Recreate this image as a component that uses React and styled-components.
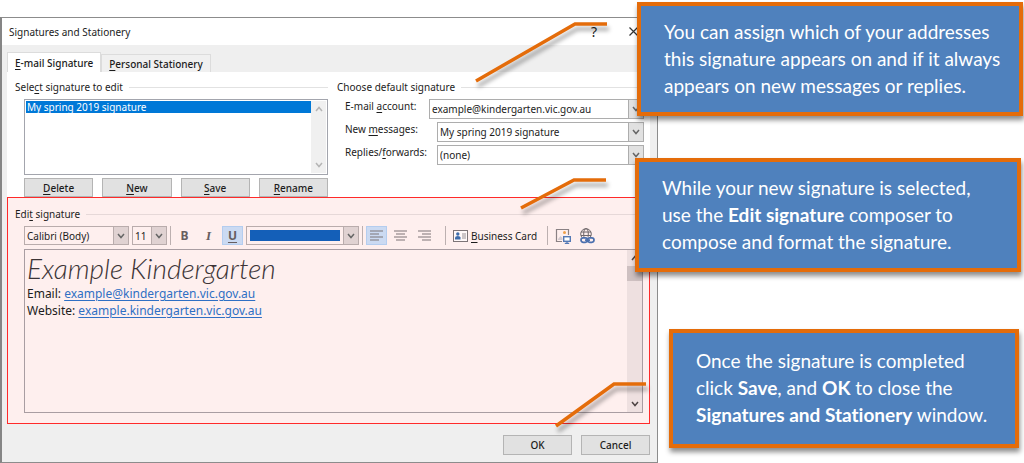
import React from "react";
import styled, { createGlobalStyle, css } from "styled-components";

const GlobalStyle = createGlobalStyle`
  * {
    box-sizing: border-box;
  }
  body {
    margin: 0;
    background: #fff;
    color: #1c1c1c;
    font-family: "Noto Sans", "Open Sans", sans-serif;
    font-size: 10px;
    line-height: 14px;
  }
  button,
  select {
    font: inherit;
    color: inherit;
  }
  u {
    text-underline-offset: 2px;
  }
`;

const Page = styled.div`
  position: relative;
  padding: 17px 366px 0 0;
`;

const Dialog = styled.main`
  background: #efefef;
  border: 1px solid #8c8c8c;
  border-left: 2px solid #858585;
`;

const TitleBar = styled.header`
  display: flex;
  align-items: center;
  justify-content: space-between;
  height: 27px;
  padding: 0 18px 0 7px;
  background: #fff;
`;

const Title = styled.h1`
  margin: 0;
  font-size: 10px;
  font-weight: 400;
`;

const WindowButtons = styled.div`
  display: flex;
  gap: 27px;
`;

const WindowButton = styled.button`
  display: flex;
  align-items: center;
  justify-content: center;
  width: 12px;
  padding: 0;
  border: 0;
  background: none;
  font-size: 14px;
`;

const Tabs = styled.div`
  display: flex;
  align-items: flex-end;
  height: 27px;
  padding-left: 5px;
`;

const Tab = styled.button`
  height: ${(props) => (props.$active ? "20px" : "18px")};
  padding: 0 7px;
  border: 1px solid #dcdcdc;
  border-bottom: 0;
  background: ${(props) => (props.$active ? "#fff" : "#f0f0f0")};
  font-weight: 500;
`;

const Panel = styled.div`
  margin: 0 7px 0 5px;
`;

const TopRow = styled.div`
  display: grid;
  grid-template-columns: 313px 1fr;
  gap: 9px;
  padding: 8px 6px 0 8px;
  background: #fff;
`;

const Group = styled.section`
  display: flex;
  flex-direction: column;
  gap: 5px;
`;

const GroupTitle = styled.h2`
  display: flex;
  align-items: center;
  gap: 6px;
  margin: 0;
  font-size: 10px;
  font-weight: 400;
  white-space: pre;

  &::after {
    content: "";
    flex: 1;
    height: 1px;
    background: ${(props) => (props.$tinted ? "#e6d8d8" : "#e2e2e2")};
  }
`;

const ListArea = styled.div`
  display: flex;
  flex-direction: column;
  gap: 3px;
  padding-left: 9px;
`;

const ListBox = styled.div`
  display: flex;
  height: 76px;
  padding: 1px;
  border: 1px solid #a3a5ad;
`;

const List = styled.ul`
  flex: 1;
  margin: 0;
  padding: 0;
  list-style: none;
`;

const ListItem = styled.li`
  padding: 0 1px;
  line-height: 12px;
  background: #0078d7;
  color: #fff;
`;

const ScrollBar = styled.div`
  display: flex;
  flex-direction: column;
  align-items: center;
  width: 15px;
  background: ${(props) => (props.$tinted ? "#eee0e0" : "#f0f0f0")};
  color: ${(props) => (props.$tinted ? "#4d4444" : "#b5b5b5")};
`;

const ScrollArrow = styled.span`
  display: flex;
  align-items: center;
  justify-content: center;
  height: 16px;
`;

const Thumb = styled.div`
  width: 100%;
  height: 15px;
  background: #cec0c1;
`;

const Track = styled.div`
  flex: 1;
`;

const ButtonRow = styled.div`
  display: grid;
  grid-template-columns: repeat(4, 1fr);
  gap: 9px;
`;

const Button = styled.button`
  height: ${(props) => (props.$tall ? "20px" : "19px")};
  padding: 0;
  border: 1px solid #b4b4b4;
  background: #e1e1e1;
  font-weight: 500;
  line-height: 14px;
`;

const Fields = styled.div`
  display: flex;
  flex-direction: column;
  gap: 3px;
  padding-left: 8px;
`;

const Field = styled.div`
  display: flex;
  align-items: flex-start;
`;

const FieldLabel = styled.label`
  width: ${(props) => (props.$short ? "84px" : "92px")};
  white-space: nowrap;
`;

const SelectBox = styled.span`
  display: grid;
  flex: ${(props) => (props.$width ? `0 0 ${props.$width}` : "1")};
  height: ${(props) => (props.$tinted ? "19px" : "20px")};
  border: 1px solid ${(props) => (props.$tinted ? "#b9acac" : "#adadad")};
`;

const Select = styled.select`
  grid-area: 1 / 1;
  width: 100%;
  padding: 0 16px 0 2px;
  border: 0;
  background: transparent;
  appearance: none;
`;

const SelectArrow = styled.span`
  grid-area: 1 / 1;
  justify-self: end;
  display: flex;
  align-items: center;
  justify-content: center;
  width: 15px;
  border-left: 1px solid ${(props) => (props.$tinted ? "#b9acac" : "#adadad")};
  background: ${(props) => (props.$tinted ? "#e0d2d2" : "#e1e1e1")};
  color: #666;
  pointer-events: none;
`;

const EditPanel = styled.section`
  padding: 9px 6px 10px 7px;
  border: 1px solid #ff2a2a;
  background: #feefee;
`;

const Toolbar = styled.div`
  display: flex;
  align-items: center;
  gap: 3px;
  margin: 5px 0 4px 9px;
  height: 19px;
`;

const Divider = styled.span`
  width: 1px;
  height: 19px;
  margin: 0 ${(props) => (props.$wide ? "4px" : "0")} 0 ${(props) => (props.$wide ? "7px" : "0")};
  background: #bcb0b0;
`;

const ToolButton = styled.button`
  display: flex;
  align-items: center;
  justify-content: center;
  width: 21px;
  height: 19px;
  padding: 0;
  border: 1px solid transparent;
  background: none;
  color: #665e60;
  ${(props) =>
    props.$active &&
    css`
      border-color: #b4cdef;
      background: #cbdaf2;
    `}
`;

const Bold = styled.b`
  font-size: 12px;
`;

const Italic = styled.i`
  font-family: "Liberation Serif", serif;
  font-size: 13px;
  font-weight: 700;
`;

const ColorButton = styled.button`
  display: flex;
  align-items: stretch;
  width: 113px;
  height: 19px;
  padding: 0;
  border: 1px solid #b9acac;
  background: transparent;
`;

const Swatch = styled.span`
  flex: 1;
  margin: 3px;
  background: #145fb8;
`;

const CardButton = styled.button`
  display: flex;
  align-items: center;
  gap: 3px;
  padding: 0;
  border: 0;
  background: none;
  white-space: nowrap;
`;

const IconButton = styled.button`
  display: flex;
  width: 21px;
  padding: 0;
  border: 0;
  background: none;
`;

const Editor = styled.div`
  display: flex;
  height: 164px;
  margin-left: 9px;
  border: 1px solid #a99da2;
`;

const EditorText = styled.div`
  flex: 1;
  padding: 1px 2px;
  font-size: 12px;
  line-height: 17px;

  p {
    margin: 0;
  }
  a {
    color: #2f6fc4;
    text-underline-offset: 2px;
  }
`;

const Handwriting = styled.p`
  font-family: "Bradley Hand ITC", "Segoe Print", Lato, cursive;
  font-size: 28px;
  font-style: italic;
  font-weight: 300;
  line-height: 34px;
  color: #3c3436;
`;

const Footer = styled.footer`
  display: flex;
  justify-content: flex-end;
  gap: 9px;
  padding: 11px 7px 7px;

  button {
    width: 69px;
  }
`;

const Callouts = styled.aside`
  position: absolute;
  top: 2px;
  right: 1px;
  display: flex;
  flex-direction: column;
  align-items: flex-end;
`;

const Callout = styled.div`
  position: relative;
  width: ${(props) => (props.$small ? "350px" : "386px")};
  margin: 0 ${(props) => props.$inset || "0"} ${(props) => props.$space || "0"} 0;
  padding: ${(props) => (props.$small ? "14px 0 16px 23px" : "12px 0 13px 23px")};
  border: 4px solid #e46c0a;
  background: #4f81bd;
  box-shadow: 1px 4px 5px rgba(0, 0, 0, 0.45);
  color: #fff;
  font-family: Lato, sans-serif;
  font-size: 19px;
  font-variant-ligatures: none;
  line-height: 27px;
  white-space: nowrap;

  p {
    margin: 0;
  }
`;

const LeaderSvg = styled.svg`
  position: absolute;
  top: ${(props) => props.$top};
  right: ${(props) => props.$right};
  overflow: visible;
  filter: drop-shadow(2px 5px 2px rgba(0, 0, 0, 0.35));
  pointer-events: none;
`;

const Leader = ({ top, right, width, height }) => (
  <LeaderSvg $top={top} $right={right} width={width} height={height} aria-hidden="true">
    <path
      d={`M0 ${height}L${width - 32} 0H${width}`}
      fill="none"
      stroke="#e46c0a"
      strokeWidth="3.5"
    />
  </LeaderSvg>
);

const Chevron = ({ up }) => (
  <svg width="8" height="6" viewBox="0 0 8 6" aria-hidden="true">
    <path
      d={up ? "M1 5L4 1.5L7 5" : "M1 1L4 4.5L7 1"}
      fill="none"
      stroke="currentColor"
      strokeWidth="1.5"
    />
  </svg>
);

const CloseIcon = () => (
  <svg width="9" height="9" viewBox="0 0 9 9" aria-hidden="true">
    <path d="M0.5 0.5L8.5 8.5M8.5 0.5L0.5 8.5" stroke="#333" strokeWidth="1.2" />
  </svg>
);

const alignPaths = {
  left: "M0 1H13M0 4H9M0 7H13M0 10H9",
  center: "M0 1H13M2 4H11M0 7H13M2 10H11",
  right: "M0 1H13M4 4H13M0 7H13M4 10H13",
};

const AlignIcon = ({ side }) => (
  <svg width="13" height="11" viewBox="0 0 13 11" aria-hidden="true">
    <path d={alignPaths[side]} stroke="#7d7477" strokeWidth="1.2" />
  </svg>
);

const CardIcon = () => (
  <svg width="15" height="12" viewBox="0 0 15 12" aria-hidden="true">
    <rect x="0.5" y="0.5" width="14" height="11" fill="#fff8f8" stroke="#7d7477" />
    <circle cx="4.8" cy="4" r="1.7" fill="#3d6cab" />
    <path d="M2 9.5V7.5Q2 6 4.8 6Q7.5 6 7.5 7.5V9.5Z" fill="#3d6cab" />
    <path d="M9 4H13M9 6H13M9 8H13" stroke="#9a9296" />
  </svg>
);

const PictureIcon = () => (
  <svg width="16" height="16" viewBox="0 0 16 16" aria-hidden="true">
    <path d="M7 13.5H1.5V1.5H13.5V7" fill="none" stroke="#8a8184" strokeWidth="1.2" />
    <path d="M3 11L5.5 8L7.5 10V12H3Z" fill="#d5cbd0" />
    <circle cx="9.5" cy="4.5" r="1.5" fill="#f0a04a" />
    <rect x="8.7" y="8.7" width="6.6" height="4.6" fill="#fff" stroke="#5479b5" strokeWidth="1.4" />
    <path d="M12 13.5V15M9.8 15.3H14.2" stroke="#5479b5" strokeWidth="1.3" />
  </svg>
);

const LinkIcon = () => (
  <svg width="16" height="16" viewBox="0 0 16 16" fill="none" aria-hidden="true">
    <g stroke="#6f676a">
      <circle cx="7" cy="6" r="5.3" />
      <ellipse cx="7" cy="6" rx="2.3" ry="5.3" />
      <path d="M2 4H12M2 7.5H12" />
    </g>
    <rect x="1.5" y="9" width="14" height="6" rx="3" fill="#feefee" />
    <g stroke="#4a6fae" strokeWidth="1.7">
      <rect x="2" y="9.9" width="6.5" height="4.4" rx="2.2" />
      <rect x="8.5" y="9.9" width="6.5" height="4.4" rx="2.2" />
      <path d="M6 12.1H11" />
    </g>
  </svg>
);

const Dropdown = ({ id, label, value, width, tinted }) => (
  <SelectBox $width={width} $tinted={tinted}>
    <Select id={id} aria-label={label}>
      <option>{value}</option>
    </Select>
    <SelectArrow $tinted={tinted}>
      <Chevron />
    </SelectArrow>
  </SelectBox>
);

const App = () => {
  return (
    <>
      <GlobalStyle />
      <Page>
        <Dialog>
          <TitleBar>
            <Title>Signatures and Stationery</Title>
            <WindowButtons>
              <WindowButton aria-label="Help">?</WindowButton>
              <WindowButton aria-label="Close">
                <CloseIcon />
              </WindowButton>
            </WindowButtons>
          </TitleBar>

          <Tabs role="tablist">
            <Tab role="tab" aria-selected="true" $active>
              <u>E</u>-mail Signature
            </Tab>
            <Tab role="tab" aria-selected="false">
              <u>P</u>ersonal Stationery
            </Tab>
          </Tabs>

          <Panel>
            <TopRow>
              <Group>
                <GroupTitle>
                  <span>
                    Sele<u>c</u>t signature to edit
                  </span>
                </GroupTitle>
                <ListArea>
                  <ListBox>
                    <List role="listbox" aria-label="Select signature to edit">
                      <ListItem role="option" aria-selected="true">
                        My spring 2019 signature
                      </ListItem>
                    </List>
                    <ScrollBar>
                      <ScrollArrow>
                        <Chevron up />
                      </ScrollArrow>
                      <Track />
                      <ScrollArrow>
                        <Chevron />
                      </ScrollArrow>
                    </ScrollBar>
                  </ListBox>
                  <ButtonRow>
                    <Button>
                      <u>D</u>elete
                    </Button>
                    <Button>
                      <u>N</u>ew
                    </Button>
                    <Button>
                      <u>S</u>ave
                    </Button>
                    <Button>
                      <u>R</u>ename
                    </Button>
                  </ButtonRow>
                </ListArea>
              </Group>

              <Group>
                <GroupTitle>Choose default signature</GroupTitle>
                <Fields>
                  <Field>
                    <FieldLabel htmlFor="account" $short>
                      E-mail <u>a</u>ccount:
                    </FieldLabel>
                    <Dropdown id="account" value="example@kindergarten.vic.gov.au" />
                  </Field>
                  <Field>
                    <FieldLabel htmlFor="messages">
                      New <u>m</u>essages:
                    </FieldLabel>
                    <Dropdown id="messages" value="My spring 2019 signature" />
                  </Field>
                  <Field>
                    <FieldLabel htmlFor="replies">
                      Replies/<u>f</u>orwards:
                    </FieldLabel>
                    <Dropdown id="replies" value="(none)" />
                  </Field>
                </Fields>
              </Group>
            </TopRow>

            <EditPanel>
              <GroupTitle $tinted>
                <span>
                  Edi<u>t</u> signature
                </span>
              </GroupTitle>
              <Toolbar>
                <Dropdown label="Font" value="Calibri (Body)" width="105px" tinted />
                <Dropdown label="Font size" value="11" width="35px" tinted />
                <Divider />
                <ToolButton aria-label="Bold">
                  <Bold>B</Bold>
                </ToolButton>
                <ToolButton aria-label="Italic">
                  <Italic>I</Italic>
                </ToolButton>
                <ToolButton aria-label="Underline" $active>
                  <Bold>
                    <u>U</u>
                  </Bold>
                </ToolButton>
                <ColorButton aria-label="Font color">
                  <Swatch />
                  <SelectArrow $tinted>
                    <Chevron />
                  </SelectArrow>
                </ColorButton>
                <Divider />
                <ToolButton aria-label="Align left" $active>
                  <AlignIcon side="left" />
                </ToolButton>
                <ToolButton aria-label="Center">
                  <AlignIcon side="center" />
                </ToolButton>
                <ToolButton aria-label="Align right">
                  <AlignIcon side="right" />
                </ToolButton>
                <Divider $wide />
                <CardButton>
                  <CardIcon />
                  <span>
                    <u>B</u>usiness Card
                  </span>
                </CardButton>
                <Divider $wide />
                <IconButton aria-label="Insert picture">
                  <PictureIcon />
                </IconButton>
                <IconButton aria-label="Insert hyperlink">
                  <LinkIcon />
                </IconButton>
              </Toolbar>
              <Editor>
                <EditorText>
                  <Handwriting>Example Kindergarten</Handwriting>
                  <p>
                    Email: <a href="mailto:example@kindergarten.vic.gov.au">example@kindergarten.vic.gov.au</a>
                  </p>
                  <p>
                    Website: <a href="#website">example.kindergarten.vic.gov.au</a>
                  </p>
                </EditorText>
                <ScrollBar $tinted>
                  <ScrollArrow>
                    <Chevron up />
                  </ScrollArrow>
                  <Thumb />
                  <Track />
                  <ScrollArrow>
                    <Chevron />
                  </ScrollArrow>
                </ScrollBar>
              </Editor>
            </EditPanel>
          </Panel>

          <Footer>
            <Button $tall>OK</Button>
            <Button $tall>Cancel</Button>
          </Footer>
        </Dialog>

        <Callouts>
          <Callout $space="42px">
            <Leader top="18px" right="412px" width={131} height={57} />
            <p>You can assign which of your addresses</p>
            <p>this signature appears on and if it always</p>
            <p>appears on new messages or replies.</p>
          </Callout>
          <Callout $inset="2px" $space="57px">
            <Leader top="18px" right="411px" width={85} height={28} />
            <p>While your new signature is selected,</p>
            <p>
              use the <b>Edit signature</b> composer to
            </p>
            <p>compose and format the signature.</p>
          </Callout>
          <Callout $small $inset="4px">
            <Leader top="51px" right="369px" width={90} height={42} />
            <p>Once the signature is completed</p>
            <p>
              click <b>Save</b>, and <b>OK</b> to close the
            </p>
            <p>
              <b>Signatures and Stationery</b> window.
            </p>
          </Callout>
        </Callouts>
      </Page>
    </>
  );
};

export default App;
